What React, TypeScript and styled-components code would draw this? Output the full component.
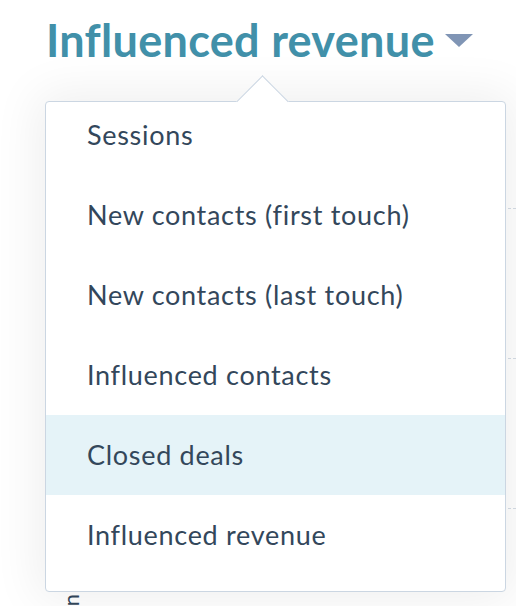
import React from "react";
import styled, { createGlobalStyle } from "styled-components";

const Global = createGlobalStyle`
  html, body { margin: 0; padding: 0; background: #ffffff; }
  body { font-family: Lato, "Open Sans", sans-serif; }
`;

const Page = styled.div`
  position: relative;
  width: 516px;
  height: 606px;
  overflow: hidden;
  background: #ffffff;
`;

const Header = styled.div`
  display: flex;
  align-items: center;
  gap: 10px;
  padding: 17px 0 0 46px;
  height: 62px;
  box-sizing: border-box;
`;

const Title = styled.h1`
  margin: 0;
  font-family: Lato, sans-serif;
  font-weight: 700;
  font-size: 45px;
  line-height: 48px;
  color: #4190a9;
  letter-spacing: 0.3px;
`;

const Caret = styled.svg`
  width: 28px;
  height: 13px;
  margin-top: 1px;
`;

const Chart = styled.div`
  display: flex;
  height: 544px;
`;

const Axis = styled.div`
  display: flex;
  flex-direction: column;
  width: 84px;
  box-sizing: border-box;
  padding: 532px 0 0 60px;
`;

const AxisLabel = styled.div`
  writing-mode: vertical-rl;
  transform: rotate(180deg);
  font-family: Lato, sans-serif;
  font-size: 22px;
  line-height: 22px;
  color: #33475b;
  white-space: nowrap;
  display: flex;
  justify-content: flex-end;
`;

const Plot = styled.div`
  flex: 1;
  display: flex;
  flex-direction: column;
  padding-top: 146px;
`;

const GridRow = styled.div`
  height: 150px;
  flex: none;
  border-top: 1px dashed #d6dde6;
  box-sizing: border-box;
`;

const Menu = styled.div`
  position: absolute;
  left: 45px;
  top: 101px;
  width: 461px;
  height: 491px;
  box-sizing: border-box;
  background: #ffffff;
  border: 1px solid #cbd6e2;
  border-radius: 4px;
  box-shadow: 0 0 48px 8px rgba(0, 0, 0, 0.065);

  &::before {
    content: "";
    position: absolute;
    left: 198px;
    top: -19px;
    width: 36px;
    height: 36px;
    background: #ffffff;
    border-top: 1px solid #cbd6e2;
    border-left: 1px solid #cbd6e2;
    transform: rotate(45deg);
  }
`;

const List = styled.ul`
  position: relative;
  list-style: none;
  margin: -7px 0 0;
  padding: 0;
`;

const Item = styled.li<{ $active?: boolean }>`
  height: 80px;
  display: flex;
  align-items: center;
  padding: 0 0 2px 41px;
  box-sizing: border-box;
  font-family: Lato, sans-serif;
  font-size: 27px;
  letter-spacing: 0.7px;
  color: #33475b;
  background: ${(p) => (p.$active ? "#e5f3f8" : "transparent")};
`;

const items = [
  "Sessions",
  "New contacts (first touch)",
  "New contacts (last touch)",
  "Influenced contacts",
  "Closed deals",
  "Influenced revenue",
];

export default function App() {
  return (
    <Page>
      <Global />
      <Header>
        <Title>Influenced revenue</Title>
        <Caret viewBox="0 0 28 13">
          <path d="M0 0 L28 0 L14 13 Z" fill="#8095b5" />
        </Caret>
      </Header>
      <Chart>
        <Axis>
          <AxisLabel>Revenue attribution</AxisLabel>
        </Axis>
        <Plot>
          <GridRow />
          <GridRow />
          <GridRow />
        </Plot>
      </Chart>
      <Menu>
        <List>
          {items.map((t) => (
            <Item key={t} $active={t === "Closed deals"}>
              {t}
            </Item>
          ))}
        </List>
      </Menu>
    </Page>
  );
}
